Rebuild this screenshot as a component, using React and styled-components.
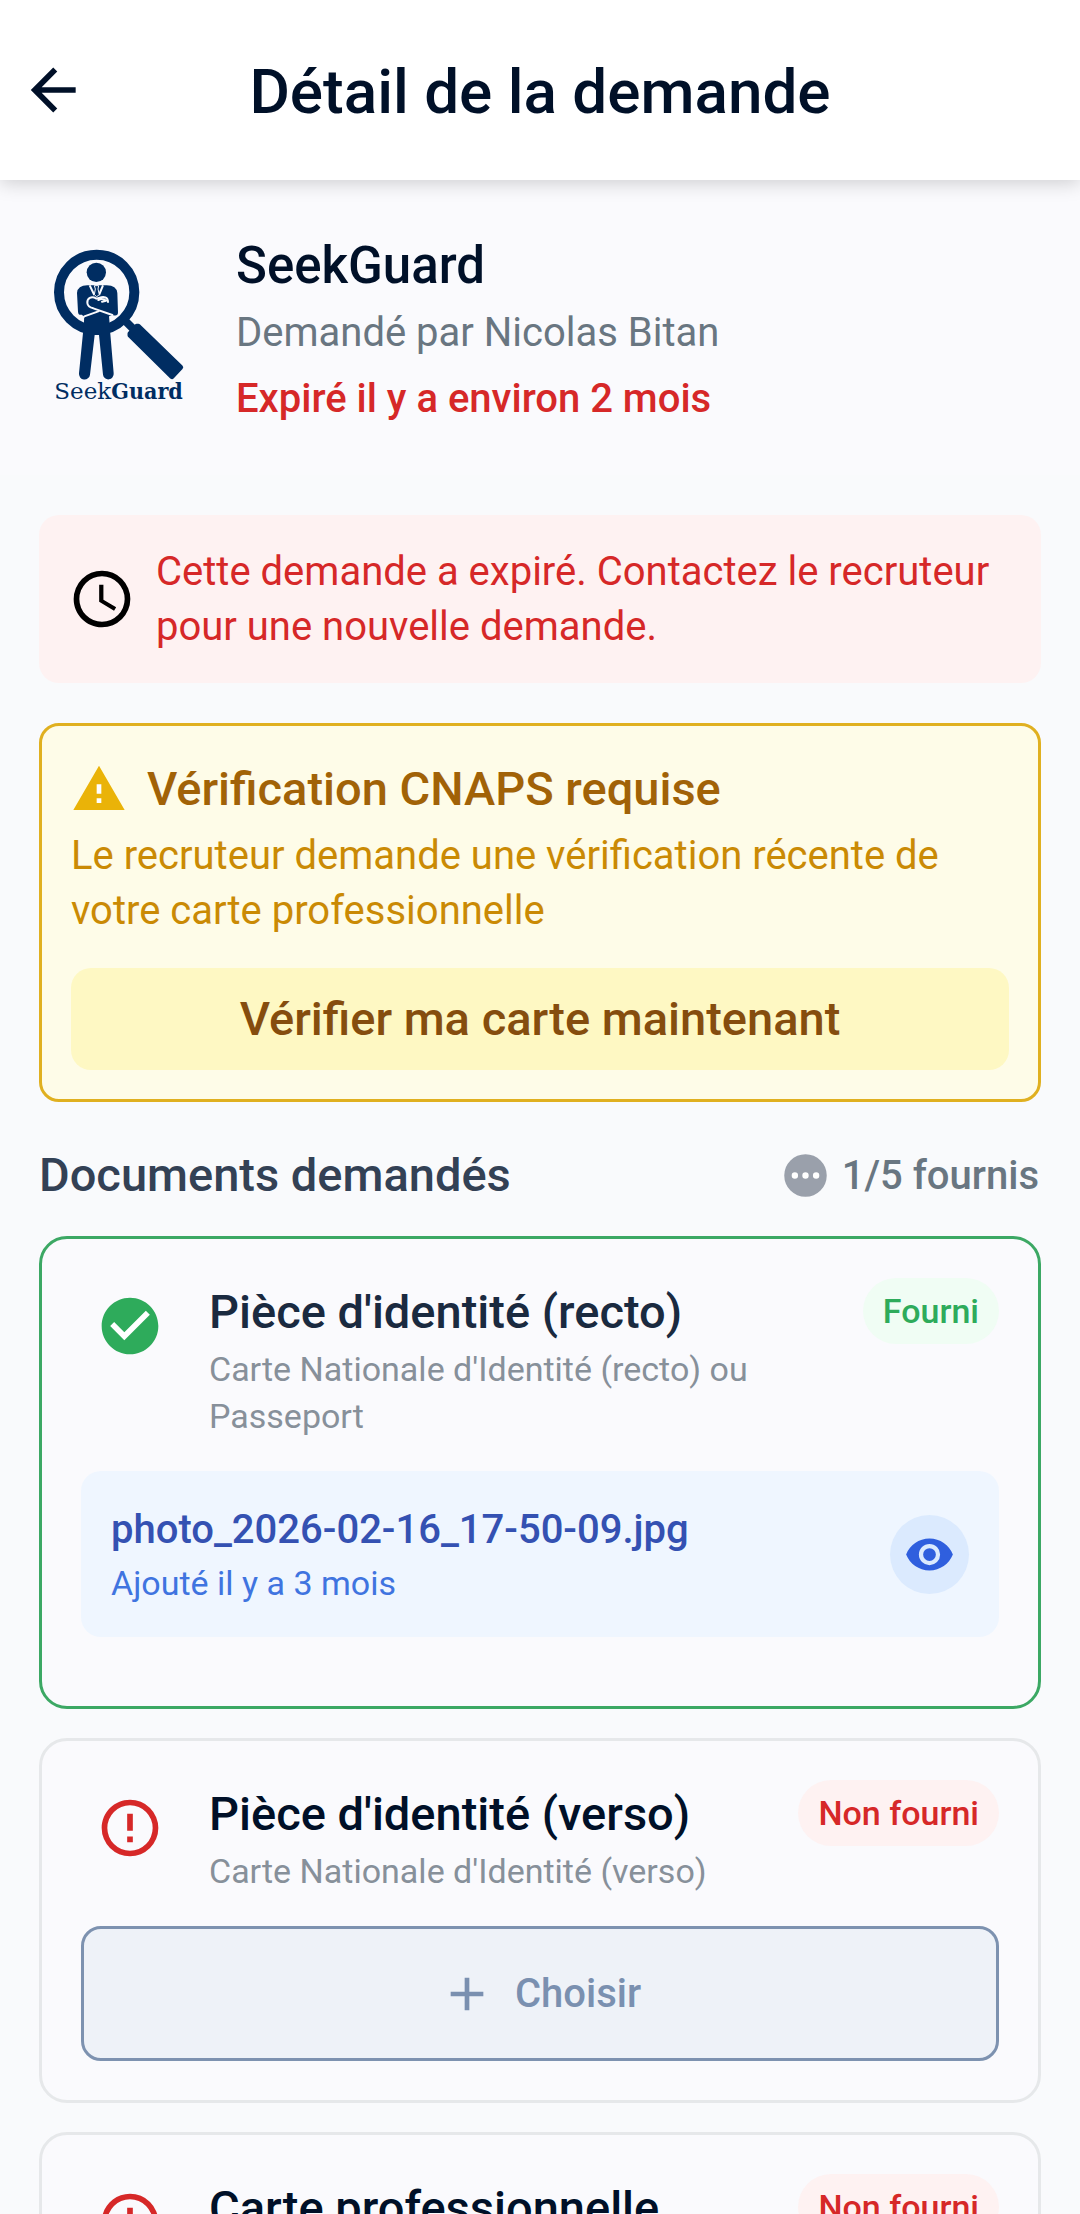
import React from "react";
import styled, { createGlobalStyle } from "styled-components";

const GlobalStyle = createGlobalStyle`
  *, *::before, *::after { box-sizing: border-box; }
  html, body { margin: 0; }
  body, button { font-family: Roboto, "Noto Sans", sans-serif; }
  h1, h2, h3, p { margin: 0; }
`;

const color = {
  ink: "#001028",
  surface: "#fafafd",
  page: "#f9fafc",
  muted: "#697681",
  red: "#d62828",
  redSoft: "#fef2f2",
  green: "#2eab5b",
  greenSoft: "#f0fdf4",
};

const Screen = styled.div`
  display: flex;
  flex-direction: column;
  height: 100vh;
  background: ${color.page};
  color: ${color.ink};
`;

const Header = styled.header`
  z-index: 1;
  display: grid;
  grid-template-columns: 68px 1fr 68px;
  align-items: center;
  flex: none;
  height: 180px;
  padding: 0 19px;
  background: #ffffff;
  box-shadow: 0 3px 18px rgba(0, 0, 0, 0.18);
`;

const BackButton = styled.button`
  display: flex;
  padding: 0;
  border: 0;
  background: none;
  color: inherit;
`;

const PageTitle = styled.h1`
  padding-top: 4px;
  font-size: 62px;
  font-weight: 500;
  line-height: 80px;
  text-align: center;
`;

const Content = styled.main`
  flex: 1;
  min-height: 0;
  overflow-y: auto;
  scrollbar-width: none;
`;

const Profile = styled.section`
  display: flex;
  align-items: center;
  gap: 39px;
  padding: 52px 39px 43px;
  background: ${color.surface};
`;

const ProfileName = styled.h2`
  font-size: 51px;
  font-weight: 500;
  line-height: 68px;
`;

const ProfileLine = styled.p`
  font-size: 40px;
  line-height: 66px;
  font-weight: ${(p) => (p.$strong ? 500 : 400)};
  color: ${(p) => (p.$strong ? color.red : color.muted)};
`;

const Sections = styled.div`
  display: flex;
  flex-direction: column;
  padding: 40px 39px;
`;

const BodyText = styled.p`
  font-size: 40px;
  line-height: 55px;
  color: ${(p) => p.$color};
`;

const ExpiredNotice = styled.section`
  display: flex;
  align-items: center;
  gap: 20px;
  padding: 29px;
  border-radius: 20px;
  background: ${color.redSoft};
  color: #000000;
`;

const CheckPanel = styled.section`
  margin-top: 40px;
  padding: 29px;
  border: 3px solid #e0b020;
  border-radius: 20px;
  background: #fefce8;
`;

const CheckHeading = styled.div`
  display: flex;
  align-items: center;
  gap: 20px;
  margin-bottom: 5px;
  color: #eab308;
`;

const CheckTitle = styled.h2`
  font-size: 47px;
  font-weight: 500;
  line-height: 68px;
  color: #a16207;
`;

const CheckButton = styled.button`
  display: block;
  width: 100%;
  margin-top: 30px;
  padding: 18px;
  border: 0;
  border-radius: 20px;
  background: #fef8c3;
  color: #854d0e;
  font-size: 47px;
  font-weight: 500;
  line-height: 66px;
`;

const ListHeading = styled.div`
  display: flex;
  align-items: center;
  justify-content: space-between;
  padding: 40px 2px 28px 0;
`;

const ListTitle = styled.h2`
  font-size: 47px;
  font-weight: 500;
  line-height: 66px;
  color: #334155;
`;

const Progress = styled.span`
  display: flex;
  align-items: center;
  gap: 11px;
  font-size: 40px;
  font-weight: 500;
  color: ${color.muted};
  svg { color: #9aa0ab; }
`;

const DocumentList = styled.div`
  display: flex;
  flex-direction: column;
  gap: 29px;
`;

const Card = styled.article`
  padding: 39px;
  border: 3px solid ${(p) => (p.$done ? "#3ca864" : "#e6e8ea")};
  border-radius: 28px;
  background: ${color.surface};
`;

const CardTop = styled.div`
  display: flex;
  align-items: flex-start;
  margin-bottom: 31px;
`;

const StatusIcon = styled.span`
  display: flex;
  padding: 14px 45px 0 15px;
  color: ${(p) => (p.$done ? color.green : color.red)};
`;

const CardText = styled.div`
  flex: 1;
  min-width: 0;
  padding-right: 24px;
`;

const CardTitle = styled.h3`
  font-size: 47px;
  font-weight: 500;
  line-height: 68px;
  color: ${(p) => (p.$done ? "#1a2a40" : color.ink)};
`;

const CardDescription = styled.p`
  font-size: 34px;
  line-height: 47px;
  color: #87909a;
`;

const Badge = styled.span`
  padding: 10px 20px;
  border-radius: 33px;
  background: ${(p) => (p.$done ? color.greenSoft : color.redSoft)};
  color: ${(p) => (p.$done ? color.green : color.red)};
  font-size: 34px;
  font-weight: 500;
  line-height: 46px;
  white-space: nowrap;
`;

const FileRow = styled.div`
  display: flex;
  align-items: center;
  justify-content: space-between;
  margin-bottom: 30px;
  padding: 30px;
  border-radius: 20px;
  background: #eff6ff;
`;

const FileName = styled.p`
  font-size: 40px;
  font-weight: 500;
  line-height: 58px;
  color: #3451b2;
`;

const FileDate = styled.p`
  font-size: 34px;
  line-height: 48px;
  color: #3f74e0;
`;

const ViewButton = styled.button`
  display: flex;
  align-items: center;
  justify-content: center;
  width: 79px;
  height: 79px;
  padding: 0;
  border: 0;
  border-radius: 50%;
  background: #dbeafe;
  color: #2f5fde;
`;

const ChooseButton = styled.button`
  display: flex;
  align-items: center;
  justify-content: center;
  gap: 20px;
  width: 100%;
  height: 135px;
  border: 3px solid #7d92b0;
  border-radius: 20px;
  background: #eef2f8;
  color: #7a90b0;
  font-size: 40px;
  font-weight: 500;
`;

const paths = {
  back: "M20,11V13H8L13.5,18.5L12.08,19.92L4.16,12L12.08,4.08L13.5,5.5L8,11H20Z",
  clock:
    "M12,20A8,8 0 0,0 20,12A8,8 0 0,0 12,4A8,8 0 0,0 4,12A8,8 0 0,0 12,20M12,2A10,10 0 0,1 22,12A10,10 0 0,1 12,22C6.47,22 2,17.5 2,12A10,10 0 0,1 12,2M12.5,7V12.25L17,14.92L16.25,16.15L11,13V7H12.5Z",
  warning: "M13 14H11V10H13M13 18H11V16H13M1 21H23L12 2L1 21Z",
  dots:
    "M12 2A10 10 0 1 0 22 12A10 10 0 0 0 12 2M7 13.5A1.5 1.5 0 1 1 8.5 12A1.5 1.5 0 0 1 7 13.5M12 13.5A1.5 1.5 0 1 1 13.5 12A1.5 1.5 0 0 1 12 13.5M17 13.5A1.5 1.5 0 1 1 18.5 12A1.5 1.5 0 0 1 17 13.5Z",
  check:
    "M12 2C6.5 2 2 6.5 2 12S6.5 22 12 22 22 17.5 22 12 17.5 2 12 2M10 17L5 12L6.41 10.59L10 14.17L17.59 6.58L19 8L10 17Z",
  alert:
    "M11,15H13V17H11V15M11,7H13V13H11V7M12,2C6.47,2 2,6.5 2,12A10,10 0 0,0 12,22A10,10 0 0,0 22,12A10,10 0 0,0 12,2M12,20A8,8 0 0,1 4,12A8,8 0 0,1 12,4A8,8 0 0,1 20,12A8,8 0 0,1 12,20Z",
  eye:
    "M12,9A3,3 0 0,0 9,12A3,3 0 0,0 12,15A3,3 0 0,0 15,12A3,3 0 0,0 12,9M12,17A5,5 0 0,1 7,12A5,5 0 0,1 12,7A5,5 0 0,1 17,12A5,5 0 0,1 12,17M12,4.5C7,4.5 2.73,7.61 1,12C2.73,16.39 7,19.5 12,19.5C17,19.5 21.27,16.39 23,12C21.27,7.61 17,4.5 12,4.5Z",
  plus: "M19,13H13V19H11V13H5V11H11V5H13V11H19V13Z",
};

const IconSvg = styled.svg`
  display: block;
  flex: none;
`;

function Icon({ name, size = 68, backing }) {
  return (
    <IconSvg width={size} height={size} viewBox="0 0 24 24" aria-hidden="true">
      {backing && <path d={backing} fill="#ffffff" />}
      <path d={paths[name]} fill="currentColor" fillRule="evenodd" />
    </IconSvg>
  );
}

const discBacking = "M12 3A9 9 0 1 0 12 21A9 9 0 1 0 12 3Z";
const markBacking = "M10 9H14V19H10Z";

function Logo() {
  const navy = "#002d62";
  return (
    <IconSvg width="158" height="168" viewBox="27 55 474 504" role="img" aria-label="SeekGuard">
      <circle cx="200" cy="188" r="113" fill="none" stroke={navy} strokeWidth="30" />
      <path d="M274 262L312 300" stroke={navy} strokeWidth="24" />
      <path
        d="M325 290L452 413L426 441L300 317V312L320 290Z"
        fill={navy}
        stroke={navy}
        strokeWidth="15"
        strokeLinejoin="round"
      />
      <circle cx="199" cy="128" r="29" fill={navy} />
      <path
        d="M141 190Q143 167 172 167H230Q260 168 262 190L264 248Q264 260 251 257L237 260L238 300H163L164 264L156 255Q145 258 144 246Z"
        fill={navy}
      />
      <path d="M161 290L163 260H237L239 290L251 431A16 16 0 0 1 219 435L207 316H194L180 435A16 16 0 0 1 147 431Z" fill={navy} />
      <path d="M179 167L193 196M219 167L207 196" fill="none" stroke={color.surface} strokeWidth="6" />
      <path d="M193 168H206L204 178L208 195L200 201L193 195L196 178Z" fill={navy} stroke={color.surface} strokeWidth="3" />
      <path
        d="M234 217C234 202 221 199 209 204L199 207C184 198 171 206 172 220C173 230 181 234 190 236L247 256M205 211Q219 204 228 213L216 216M157 266L163 260L205 245"
        fill="none"
        stroke={color.surface}
        strokeWidth="6"
        strokeLinecap="round"
        strokeLinejoin="round"
      />
      <text x="73" y="509" fill={navy} fontSize="69" fontFamily="'DejaVu Serif', serif">
        Seek
        <tspan fontWeight="700" fontFamily="'DejaVu Serif Condensed', 'DejaVu Serif', serif">Guard</tspan>
      </text>
    </IconSvg>
  );
}

function DocumentCard({ title, description, done, children }) {
  return (
    <Card $done={done}>
      <CardTop>
        <StatusIcon $done={done}>
          <Icon name={done ? "check" : "alert"} backing={done ? discBacking : undefined} />
        </StatusIcon>
        <CardText>
          <CardTitle $done={done}>{title}</CardTitle>
          {description && <CardDescription>{description}</CardDescription>}
        </CardText>
        <Badge $done={done}>{done ? "Fourni" : "Non fourni"}</Badge>
      </CardTop>
      {children}
    </Card>
  );
}

export default function App() {
  return (
    <Screen>
      <GlobalStyle />
      <Header>
        <BackButton type="button" aria-label="Retour">
          <Icon name="back" />
        </BackButton>
        <PageTitle>Détail de la demande</PageTitle>
      </Header>
      <Content>
        <Profile>
          <Logo />
          <div>
            <ProfileName>SeekGuard</ProfileName>
            <ProfileLine>Demandé par Nicolas Bitan</ProfileLine>
            <ProfileLine $strong>Expiré il y a environ 2 mois</ProfileLine>
          </div>
        </Profile>
        <Sections>
          <ExpiredNotice>
            <Icon name="clock" />
            <BodyText $color={color.red}>
              Cette demande a expiré. Contactez le recruteur pour une nouvelle demande.
            </BodyText>
          </ExpiredNotice>
          <CheckPanel>
            <CheckHeading>
              <Icon name="warning" size={56} backing={markBacking} />
              <CheckTitle>Vérification CNAPS requise</CheckTitle>
            </CheckHeading>
            <BodyText $color="#ca8a04">
              Le recruteur demande une vérification récente de votre carte professionnelle
            </BodyText>
            <CheckButton type="button">Vérifier ma carte maintenant</CheckButton>
          </CheckPanel>
          <ListHeading>
            <ListTitle>Documents demandés</ListTitle>
            <Progress>
              <Icon name="dots" size={51} backing={discBacking} />
              1/5 fournis
            </Progress>
          </ListHeading>
          <DocumentList>
            <DocumentCard done title="Pièce d'identité (recto)" description="Carte Nationale d'Identité (recto) ou Passeport">
              <FileRow>
                <div>
                  <FileName>photo_2026-02-16_17-50-09.jpg</FileName>
                  <FileDate>Ajouté il y a 3 mois</FileDate>
                </div>
                <ViewButton type="button" aria-label="Voir le document">
                  <Icon name="eye" size={51} />
                </ViewButton>
              </FileRow>
            </DocumentCard>
            <DocumentCard title="Pièce d'identité (verso)" description="Carte Nationale d'Identité (verso)">
              <ChooseButton type="button">
                <Icon name="plus" size={56} />
                Choisir
              </ChooseButton>
            </DocumentCard>
            <DocumentCard title="Carte professionnelle" />
          </DocumentList>
        </Sections>
      </Content>
    </Screen>
  );
}
